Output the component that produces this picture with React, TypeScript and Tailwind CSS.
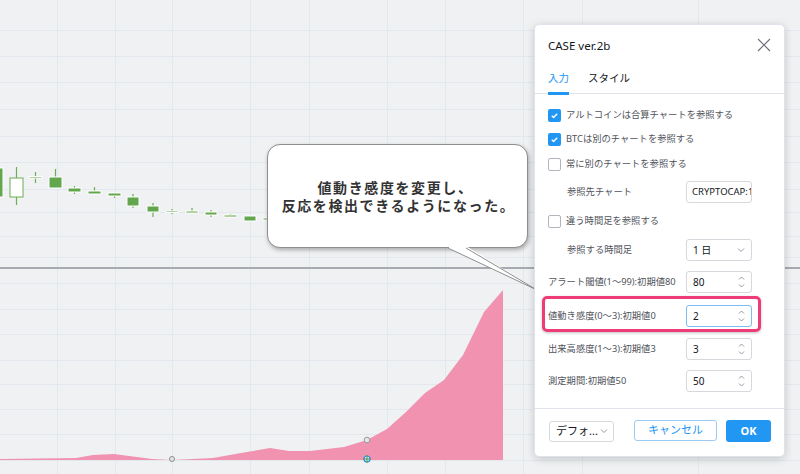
import React from 'react';

const FONT = { fontFamily: '"Noto Sans", "Noto Sans CJK JP", sans-serif' };

const V_LINES = [57, 115, 172, 250, 309, 387, 445, 523, 582, 698];
const H_LINES = [30, 56, 82, 109, 136, 162, 189, 212, 236, 257, 283, 309, 334, 360, 384, 409, 434, 460];

// x, width, bodyTop, bodyBottom, wickTop, wickBottom, hollow
const CANDLES: [number, number, number, number, number, number, boolean][] = [
  [-9, 12, 168, 197, 164, 199, false],
  [10, 13, 178, 197, 167, 205, true],
  [29, 13, 176.5, 178, 172, 183, false],
  [49, 13, 177, 188, 169, 188, false],
  [68, 13, 188, 192, 186, 194, false],
  [88, 13, 191, 194, 187, 194, false],
  [108, 13, 193, 196, 193, 198, false],
  [127, 12, 197, 206, 194, 208, false],
  [147, 12, 206, 212, 203, 217, false],
  [166, 12, 211, 212.5, 209, 214, false],
  [186, 12, 211, 213, 208, 213, false],
  [205, 12, 212, 215, 210, 217, false],
  [224, 13, 215, 217, 214, 217, false],
  [244, 12, 216, 221, 216, 221, false],
  [263, 12, 218, 220, 217, 221, false],
];

const AREA = [
  [0, 459], [76, 458], [93, 455], [114, 454], [152, 459], [172, 460], [213, 458], [241, 453],
  [270, 448], [289, 451], [310, 451], [344, 447], [367, 440], [387, 429], [406, 412], [425, 393],
  [444, 380], [463, 355], [484, 312], [503, 290], [503, 460], [0, 460],
];

function Chart() {
  return (
    <svg width="800" height="474" viewBox="0 0 800 474" className="block">
      <rect width="800" height="474" fill="#f0f1f3" />
      {V_LINES.map((x) => (
        <line key={`v${x}`} x1={x + 0.5} x2={x + 0.5} y1="0" y2="474" stroke="#e3e8ee" />
      ))}
      {H_LINES.map((y) => (
        <line key={`h${y}`} x1="0" x2="800" y1={y + 0.5} y2={y + 0.5} stroke="#e3e8ee" />
      ))}
      {CANDLES.map(([x, w, bt, bb, wt, wb, hollow], i) => (
        <g key={i}>
          <line x1={x + w / 2} x2={x + w / 2} y1={wt} y2={wb} stroke="#6aae55" strokeWidth="1.2" />
          <rect
            x={x}
            y={bt}
            width={w}
            height={Math.max(bb - bt, 1.5)}
            fill={hollow ? '#ffffff' : '#62a64d'}
            stroke={hollow ? '#6aae55' : '#ffffff'}
            strokeWidth="1"
          />
        </g>
      ))}
      <rect x="0" y="267" width="800" height="2" fill="#a7aab1" />
      <polygon points={AREA.map((p) => p.join(',')).join(' ')} fill="#f092b0" />
      <circle cx="172" cy="459" r="2.5" fill="#e6e6e6" stroke="#8c8c8c" strokeWidth="1" />
      <circle cx="367" cy="440" r="2.8" fill="#e6e6e6" stroke="#9a9a9a" strokeWidth="1" />
      <circle cx="367" cy="459" r="3" fill="#e6e6e6" stroke="#2d8fdc" strokeWidth="1.2" />
      <path d="M363 459h8M367 455v8" stroke="#4a9a5c" strokeWidth="1" />
    </svg>
  );
}

function Check({ on }: { on: boolean }) {
  return on ? (
    <span className="flex h-[13px] w-[13px] items-center justify-center rounded-[2px] bg-[#2196f3]">
      <svg width="9" height="9" viewBox="0 0 10 10">
        <path d="M2 5.3l2 2L8 3" fill="none" stroke="#fff" strokeWidth="1.5" />
      </svg>
    </span>
  ) : (
    <span className="h-[13px] w-[13px] rounded-[2px] border border-[#b2b5be] bg-white" />
  );
}

function Spinner() {
  return (
    <svg width="7" height="14" viewBox="0 0 7 14" className="ml-auto shrink-0">
      <path d="M1 4.5l2.5-2.5L6 4.5M1 9.5l2.5 2.5L6 9.5" fill="none" stroke="#8a8d96" strokeWidth="0.9" />
    </svg>
  );
}

function Chevron() {
  return (
    <svg width="8" height="6" viewBox="0 0 8 6" className="ml-auto shrink-0">
      <path d="M1 1.5l3 3 3-3" fill="none" stroke="#8a8d96" strokeWidth="0.9" />
    </svg>
  );
}

function Field({ value, kind, focused }: { value: string; kind: 'text' | 'num' | 'select'; focused?: boolean }) {
  return (
    <div
      className={`ml-auto mr-[32px] flex h-[22px] w-[66px] shrink-0 items-center overflow-hidden whitespace-nowrap rounded-[3px] border bg-white text-[#131722] ${
        kind === 'text' ? 'pl-[5px] pr-[2px] text-[9.5px]' : 'pl-[6px] pr-[6px] text-[10px]'
      } ${focused ? 'border-[#7cbcf4]' : 'border-[#d6d8de]'}`}
    >
      <span>{value}</span>
      {kind === 'num' && <Spinner />}
      {kind === 'select' && <Chevron />}
    </div>
  );
}

function CheckRow({ on, label, h }: { on: boolean; label: string; h: string }) {
  return (
    <div className={`flex items-center gap-[5px] pl-[13px] ${h}`}>
      <Check on={on} />
      <span>{label}</span>
    </div>
  );
}

function FieldRow({ label, indent, h, children }: { label: string; indent?: boolean; h: string; children: React.ReactNode }) {
  return (
    <div className={`flex items-center ${indent ? 'pl-[32px]' : 'pl-[13px]'} ${h}`}>
      <span className="whitespace-nowrap">{label}</span>
      {children}
    </div>
  );
}

function Dialog() {
  return (
    <div
      className="absolute left-[534px] top-[24px] flex h-[433px] w-[251px] flex-col rounded-[5px] border border-[#e0e3eb] bg-white shadow-[0_2px_8px_rgba(0,0,0,0.18)]"
      style={FONT}
    >
      <div className="flex h-[40px] items-center pl-[13px] pr-[13px] pt-[1px]">
        <span className="text-[11.5px] text-[#131722]">CASE ver.2b</span>
        <svg width="14" height="14" viewBox="0 0 14 14" className="ml-auto mt-[-1px]">
          <path d="M1 1l12 12M13 1L1 13" stroke="#6a6d78" strokeWidth="1.1" />
        </svg>
      </div>
      <div className="flex h-[29px] items-stretch gap-[19px] border-b border-[#e0e3eb] pl-[13px] text-[10.5px]">
        <div className="relative flex items-center text-[#2196f3]">
          入力
          <span className="absolute bottom-[-2px] left-0 right-0 h-[3px] bg-[#2196f3]" />
        </div>
        <div className="flex items-center text-[#131722]">スタイル</div>
      </div>
      <div className="relative flex flex-col pt-[9px] text-[9.3px] text-[#50535b]">
        <CheckRow on label="アルトコインは合算チャートを参照する" h="h-[24px]" />
        <CheckRow on label="BTCは別のチャートを参照する" h="h-[24px]" />
        <CheckRow on={false} label="常に別のチャートを参照する" h="h-[26px]" />
        <FieldRow label="参照先チャート" indent h="h-[30px]">
          <Field value="CRYPTOCAP:1" kind="text" />
        </FieldRow>
        <CheckRow on={false} label="違う時間足を参照する" h="h-[28px]" />
        <FieldRow label="参照する時間足" indent h="h-[30px]">
          <Field value="1 日" kind="select" />
        </FieldRow>
        <FieldRow label="アラート閾値(1〜99):初期値80" h="h-[34px]">
          <Field value="80" kind="num" />
        </FieldRow>
        <FieldRow label="値動き感度(0〜3):初期値0" h="h-[34px]">
          <Field value="2" kind="num" focused />
        </FieldRow>
        <FieldRow label="出来高感度(1〜3):初期値3" h="h-[32px]">
          <Field value="3" kind="num" />
        </FieldRow>
        <FieldRow label="測定期間:初期値50" h="h-[32px]">
          <Field value="50" kind="num" />
        </FieldRow>
        <div className="pointer-events-none absolute left-[7px] top-[202px] h-[36px] w-[219px] rounded-[5px] border-[3px] border-[#ee3d76] shadow-[0_1px_3px_rgba(0,0,0,0.25)]" />
      </div>
      <div className="mt-[11px] flex flex-1 items-center border-t border-[#e0e3eb] pl-[14px] pr-[13px] pb-[3px]">
        <div className="flex h-[21px] w-[65px] items-center rounded-[3px] border border-[#d6d8de] pl-[6px] pr-[5px] text-[11px] text-[#131722]">
          <span>デフォ...</span>
          <Chevron />
        </div>
        <div className="ml-auto flex gap-[9px]">
          <div className="flex h-[21px] w-[83px] items-center justify-center rounded-[3px] border border-[#9ccbf5] text-[11px] text-[#2196f3]">
            キャンセル
          </div>
          <div className="flex h-[22px] w-[45px] items-center justify-center rounded-[3px] bg-[#2196f3] text-[11px] font-bold text-white">
            OK
          </div>
        </div>
      </div>
    </div>
  );
}

function Bubble() {
  return (
    <>
      <div
        className="absolute left-[267px] top-[144px] flex h-[104px] w-[261px] flex-col items-center justify-center rounded-[13px] border border-[#8e8e8e] bg-white text-[14px] font-semibold leading-[18px] tracking-[1.6px] text-[#333333] shadow-[1px_2px_4px_rgba(0,0,0,0.3)]"
        style={{ fontFamily: '"Noto Sans CJK JP", sans-serif' }}
      >
        <span className="pr-[4px]">値動き感度を変更し、</span>
        <span className="pl-[2px]">反応を検出できるようになった。</span>
      </div>
      <svg width="100" height="52" viewBox="0 0 100 52" className="absolute left-[440px] top-[246px] overflow-visible">
        <polygon points="8,0 26,0 97,44" fill="#ffffff" />
        <polygon points="8,2 26,2 97,44" fill="#ffffff" />
        <path d="M8 2L97 44L26 2" fill="none" stroke="#8e8e8e" strokeWidth="1" />
        <path d="M9 1h16" stroke="#ffffff" strokeWidth="2.5" />
      </svg>
    </>
  );
}

export default function App() {
  return (
    <div className="relative h-[474px] w-[800px] overflow-hidden bg-[#f0f1f3]">
      <Chart />
      <Bubble />
      <Dialog />
    </div>
  );
}
